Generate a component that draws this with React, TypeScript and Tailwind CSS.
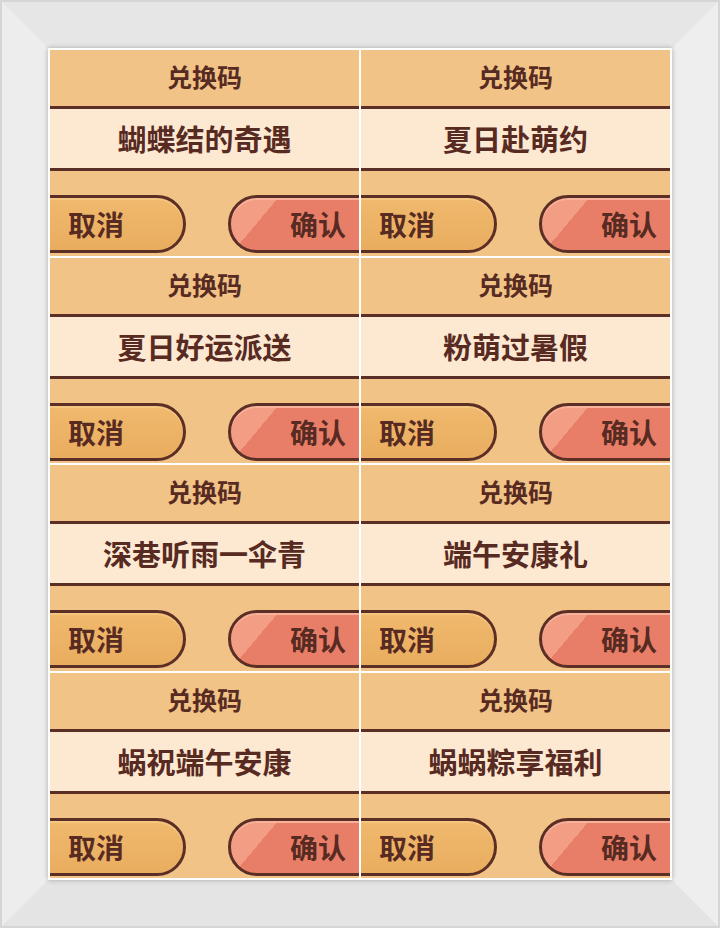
const CODES = [
  "蝴蝶结的奇遇",
  "夏日赴萌约",
  "夏日好运派送",
  "粉萌过暑假",
  "深巷听雨一伞青",
  "端午安康礼",
  "蜗祝端午安康",
  "蜗蜗粽享福利",
];

const FONT = "font-['Noto_Sans_CJK_SC','Noto_Sans',sans-serif]";

function CodeCard({ title }: { title: string }) {
  return (
    <div className="flex flex-col overflow-hidden bg-[#f2c386] text-[#572a22]">
      <div className="flex h-[59px] shrink-0 items-center justify-center border-b-[3px] border-[#5c2f26] pb-[3px] text-[25px] font-bold leading-none">
        兑换码
      </div>
      <div className="flex h-[62px] shrink-0 items-center justify-center border-b-[3px] border-[#5c2f26] bg-[#fde8d2] text-[29px] font-bold leading-none">
        {title}
      </div>
      <div className="h-[24px] shrink-0" />
      <div className="flex h-[58px] shrink-0 items-stretch">
        <div className="-ml-[40px] flex w-[176px] shrink-0 items-center rounded-r-full border-[3px] border-[#5c2f26] bg-[linear-gradient(180deg,#f0b96d,#e9ad5f)] pl-[55px] text-[28px] font-bold leading-none shadow-[inset_0_2px_0_#f5c680]">
          取消
        </div>
        <div className="ml-[42px] flex w-[220px] shrink-0 items-center rounded-l-full border-[3px] border-[#5c2f26] bg-[linear-gradient(130deg,#f29d84_36px,#e97e68_36px)] pl-[59px] text-[28px] font-bold leading-none shadow-[inset_0_2px_0_#f7b29c]">
          确认
        </div>
      </div>
    </div>
  );
}

export default function App() {
  return (
    <div className={`h-[928px] w-[720px] bg-[#d6d6d6] p-[2px] ${FONT}`}>
      <div className="h-full w-full border-[46px] border-b-[#e4e4e4] border-l-[#ededed] border-r-[#eeeeee] border-t-[#e6e6e6]">
        <div className="grid h-full w-full grid-cols-2 grid-rows-4 gap-[2px] bg-white p-[2px] shadow-[0_0_5px_rgba(0,0,0,0.28)]">
          {CODES.map((c) => (
            <CodeCard key={c} title={c} />
          ))}
        </div>
      </div>
    </div>
  );
}
